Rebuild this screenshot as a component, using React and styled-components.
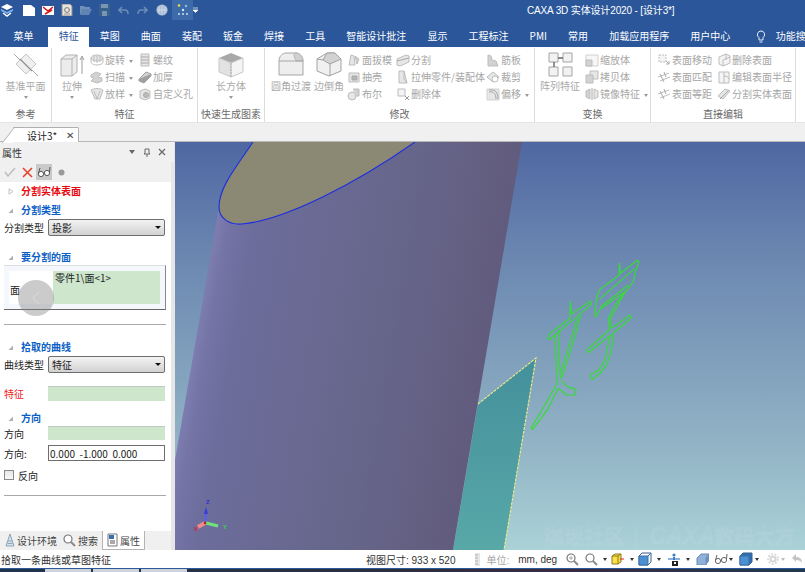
import React from "react";
import styled, { createGlobalStyle } from "styled-components";

const FONT = `"Noto Sans CJK SC", "Noto Sans", sans-serif`;
const MIXED = `"Liberation Sans", "Noto Sans CJK SC", sans-serif`;

const Global = createGlobalStyle`
  html, body { margin: 0; padding: 0; width: 805px; height: 572px; overflow: hidden; background: #f0f0f0; }
  * { box-sizing: border-box; }
  body { font-family: ${FONT}; font-size: 10px; }
`;

const Page = styled.div`
  width: 805px; height: 572px; display: flex; flex-direction: column; overflow: hidden;
`;

/* ---------- title bar ---------- */
const TitleBar = styled.div`
  height: 27px; background: #2b579a; display: flex; position: relative; padding-left: 0; color: #fff;
`;
const QuickIcon = styled.div`
  width: ${p => p.$w || 19}px; height: ${p => p.$h || 20}px; display: flex; align-items: center; justify-content: center;
  margin-left: ${p => p.$ml || 0}px; background: ${p => p.$active ? "#3d6aa8" : "transparent"}; flex: none;
`;
const TitleText = styled.div`
  position: absolute; left: 527px; top: 3px; line-height: 16px; font-size: 10px; color: #fff; white-space: nowrap;
  font-family: ${MIXED}; letter-spacing: -.15px;
`;

/* ---------- tabs ---------- */
const TabRow = styled.div`
  height: 20px; background: #2b579a; display: flex; padding-left: 3px; white-space: nowrap; overflow: hidden;
`;
const Tab = styled.div`
  padding: 0 ${p => p.$pad || 10.55}px; height: 20px; line-height: 18px; font-size: 10px; flex: none;
  margin-left: ${p => p.$ml || 0}px;
  color: ${p => p.$active ? "#2b579a" : "#fff"};
  background: ${p => p.$active ? "#fff" : "transparent"};
`;

/* ---------- ribbon ---------- */
const Ribbon = styled.div`
  height: 76px; background: #fff; display: flex; border-bottom: 1px solid #e4e4e4;
`;
const Group = styled.div`
  width: ${p => p.$w}px; flex: none; display: flex; flex-direction: column; position: relative;
  border-right: 1px solid #dcdcdc; height: 74px; margin-top: 1px;
`;
const GroupBody = styled.div`
  height: 59px; display: flex;
`;
const GroupLabel = styled.div`
  height: 14px; line-height: 14px; text-align: center; font-size: 10px; color: #6a6a6a; white-space: nowrap;
`;
const Big = styled.div`
  width: ${p => p.$w}px; margin-left: ${p => p.$ml || 0}px; flex: none; display: flex; flex-direction: column; align-items: center;
  padding-top: 3px; color: #aaa; font-size: 10px; white-space: nowrap;
`;
const BigLabel = styled.div`
  height: 14px; line-height: 14px; margin-top: 1px;
`;
const Caret = styled.div`
  width: 0; height: 0; border-left: 2px solid transparent; border-right: 2px solid transparent; border-top: 3px solid #999;
  margin-top: ${p => p.$mt || 3}px; margin-left: ${p => p.$ml || 0}px; flex: none;
`;
const Col = styled.div`
  width: ${p => p.$w}px; margin-left: ${p => p.$ml || 0}px; flex: none; padding-top: 3px; display: flex; flex-direction: column;
`;
const Row = styled.div`
  height: 17px; display: flex; align-items: center; gap: 1px; color: #a6a6a6; font-size: 10px; white-space: nowrap;
`;

/* ---------- doc tabs ---------- */
const DocBar = styled.div`
  height: 19px; background: #f0f0f0; border-bottom: 1px solid #b8b8b8; position: relative; padding-left: 13px; padding-top: 4px;
`;
const DocTab = styled.div`
  width: 66px; height: 15px; background: #fff; border: 1px solid #b0b0b0; border-left: none; border-bottom: none; position: relative;
  border-radius: 0 2px 0 0; display: flex; align-items: center; padding-left: 14px; font-size: 10px; color: #222; white-space: nowrap;
  &::before {
    content: ""; position: absolute; left: -5px; top: -1px; width: 10px; height: 15px; background: #fff;
    border-left: 1px solid #b0b0b0; transform: skewX(-38deg); border-top: 1px solid #b0b0b0;
  }
  & > span { position: relative; }
`;
const DocClose = styled.span`
  margin-left: 9px; font-size: 10px; color: #444; line-height: 10px;
`;

/* ---------- main ---------- */
const Main = styled.div`
  height: 408px; display: flex; flex: none;
`;
const Panel = styled.div`
  width: 175px; flex: none; background: #e6e6e6; display: flex; flex-direction: column; padding-right: 4px;
`;
const PanelHeader = styled.div`
  height: 20px; background: #f0f0f0; display: flex; align-items: center; padding: 0 8px 0 2px; color: #333; font-size: 10px; margin-right: -3px;
`;
const HeaderTools = styled.div`
  margin-left: auto; display: flex; gap: 7px; align-items: center;
`;
const PanelTools = styled.div`
  height: 20px; background: #f0f0f0; display: flex; align-items: center; padding-left: 2px; gap: 1px; margin-right: 0;
`;
const ToolBtn = styled.div`
  width: 16px; height: 16px; display: flex; align-items: center; justify-content: center;
  background: ${p => p.$on ? "#c9c9c9" : "transparent"};
`;
const PanelBody = styled.div`
  flex: 1; background: #fff; padding: 2px 0 0 4px; display: flex; flex-direction: column; min-height: 0;
`;
const Head = styled.div`
  height: 14px; margin-top: ${p => p.$mt || 0}px; display: flex; align-items: center; gap: 7px; margin-left: 4px;
  font-size: 10px; font-weight: 700; color: ${p => p.$red ? "#e8070f" : "#0c5fc4"}; line-height: 14px;
`;
const FieldRow = styled.div`
  height: ${p => p.$h || 17}px; margin-top: ${p => p.$mt || 0}px; display: flex; align-items: center; font-size: 10px;
  color: ${p => p.$red ? "#ee1c25" : "#222"}; width: 162px;
`;
const FieldLabel = styled.div`
  width: 44px; flex: none; white-space: nowrap;
`;
const SelectWrap = styled.div`
  flex: 1; height: 100%; position: relative; margin-right: 1px;
  &::after {
    content: ""; position: absolute; right: 4px; top: 7px; border-left: 3px solid transparent; border-right: 3px solid transparent; border-top: 3px solid #111;
  }
`;
const Select = styled.select`
  appearance: none; width: 100%; height: 100%; display: block; border: 1px solid #6e6e6e; border-radius: 2px; padding: 0 0 0 3px;
  font: 10px ${FONT}; color: #222; background: linear-gradient(#f3f3f3, #d2d2d2); outline: none;
`;
const GreenBox = styled.div`
  flex: 1; height: 100%; background: #cde6cc; border-top: 1px solid #c2c8c2; margin-right: 1px;
`;
const TextInput = styled.input`
  flex: 1; height: 100%; border: 1px solid #6e6e6e; padding: 0 0 0 1px; font: 10px ${FONT}; color: #222; min-width: 0; margin-right: 1px; background: #fff; outline: none;
`;
const FaceBox = styled.div`
  width: 162px; height: 45px; margin-top: 1px; position: relative; display: flex; padding: 5px 5px 5px 5px; background: #f4f7fc;
  border-bottom: 1px solid #666; border-right: 1px solid #888; border-top: 1px solid #ddd;
`;
const FaceLabel = styled.div`
  width: 44px; background: #fff; flex: none; font-size: 10px; color: #222; display: flex; align-items: center; padding-left: 1px; padding-top: 3px;
`;
const FaceValue = styled.div`
  flex: 1; background: #cde6cc; font-size: 10px; color: #222; padding-left: 2px; line-height: 14px;
`;
const BackCircle = styled.div`
  position: absolute; left: 14px; top: 14px; width: 36px; height: 36px; border-radius: 50%; background: rgba(130,130,130,.42);
  display: flex; align-items: center; justify-content: center;
`;
const Rule = styled.div`
  width: 162px; height: 1px; background: #a8a8a8; margin-top: ${p => p.$mt}px;
`;
const CheckRow = styled.div`
  display: flex; align-items: center; gap: 4px; height: 14px; margin-top: ${p => p.$mt}px; font-size: 10px; color: #222;
`;
const CheckBox = styled.span`
  width: 10px; height: 10px; border: 1px solid #8a8a8a; background: linear-gradient(#e6e6e6, #f8f8f8); display: block;
`;
const BottomTabs = styled.div`
  height: 19px; background: #f0f0f0; display: flex; align-items: flex-start; padding-left: 4px; font-size: 10px; color: #444; margin-right: 0;
`;
const BottomTab = styled.div`
  display: flex; align-items: center; gap: 2px; height: ${p => p.$on ? 19 : 18}px; padding: 0 ${p => p.$on ? 4 : 1}px;
  margin-left: ${p => p.$ml || 0}px; background: ${p => p.$on ? "#fff" : "transparent"};
  border: ${p => p.$on ? "1px solid #b4b4b4" : "none"}; border-top: none; white-space: nowrap;
`;

const Viewport = styled.div`
  width: 630px; height: 408px; position: relative; overflow: hidden; flex: none;
  background: linear-gradient(#4f67a2 0%, #6a86b0 27%, #93b5c6 76%, #abd2d7 100%);
`;
const Scene = styled.svg`
  display: block; width: 630px; height: 408px;
`;
const Watermark = styled.div`
  position: absolute; left: 369px; top: 380px; font-size: 20px; line-height: 28px; font-weight: 700; white-space: nowrap;
  color: rgba(255,255,255,.06); -webkit-text-stroke: .5px rgba(255,255,255,.1); letter-spacing: 0;
  & i { font-family: "Liberation Sans", sans-serif; font-size: 23px; }
  & b { font-weight: 400; margin: 0 11px 0 9px; }
`;

/* ---------- status ---------- */
const Status = styled.div`
  height: 18px; background: #fff; display: flex; align-items: center; font-size: 10px; color: #333; flex: none; white-space: nowrap; overflow: hidden;
`;
const StatusMsg = styled.div`
  width: 366px; flex: none; padding-left: 1px;
`;
const StatusText = styled.div`
  flex: none; margin-left: ${p => p.$ml || 0}px; color: ${p => p.$dim ? "#a8a8a8" : "#333"}; font-family: ${MIXED}; white-space: pre;
`;
const StatusIcon = styled.div`
  flex: none; margin-left: ${p => p.$ml || 0}px; width: ${p => p.$w || 14}px; height: 14px; display: flex; align-items: center; justify-content: center;
`;
const StatusCaret = styled.div`
  flex: none; margin-left: ${p => p.$ml || 2}px; border-left: 2px solid transparent; border-right: 2px solid transparent; border-top: 3px solid ${p => p.$dim ? "#bbb" : "#333"};
`;
const Strip = styled.div`
  flex: 1; border-top: 1px solid #2b5a9c; display: flex; background: linear-gradient(90deg, #20344e, #2a2f3c 50%, #3a2a40 70%, #1f3a50);
  padding-left: 45px; gap: 2px;
`;
const StripSeg = styled.div`
  width: 46px; background: #ccd3da;
`;

/* ---------- small helpers ---------- */
const S = ({ w = 14, h = 14, vb, children }) => (
  <svg width={w} height={h} viewBox={vb || `0 0 ${w} ${h}`} fill="none">{children}</svg>
);
const g1 = "#bdbdbd", g2 = "#e6e6e6", g3 = "#d2d2d2";

const icons = {
  revolve: <S><ellipse cx="7" cy="5" rx="6" ry="3" fill={g2} stroke={g1}/><path d="M1 5v4c0 1.6 2.7 3 6 3s6-1.4 6-3V5M4 3v6M7 3v7M10 3v6" stroke={g1}/></S>,
  thread: <S><path d="M3 1h8v12H3z" fill={g2} stroke={g1}/><path d="M3 4h8M3 7h8M3 10h8" stroke="#aaa"/></S>,
  sweep: <S><path d="M1 5l5-3 5 2-3 3 4 1v3l-5 2-6-2 3-3-3-1z" fill={g3} stroke={g1}/></S>,
  thick: <S><path d="M1 9l7-7 5 2-7 7z" fill={g3} stroke="#a0a0a0"/><path d="M1 9v2l5 2 7-7V4" fill="#9f9f9f" stroke="#a0a0a0"/></S>,
  loft: <S><path d="M1 3c4-2 8-2 12 0l-3 9H5z" fill={g2} stroke={g1}/><path d="M4 4l3 8 3-8" stroke={g1}/></S>,
  hole: <S><path d="M2 4l5-2 5 2v7l-5 2-5-2z" fill={g2} stroke={g1}/><circle cx="8" cy="8" r="2.5" fill="#bbb" stroke="#aaa"/></S>,
  draft: <S><path d="M2 12l2-10 3 1 1 9z" fill={g2} stroke={g1}/><path d="M8 3l4 3-2 5z" fill={g3} stroke={g1}/></S>,
  shell: <S><path d="M2 3h10v9H2z" fill={g2} stroke={g1}/><path d="M5 6h5v4H5z" fill="#b5b5b5" stroke="#a8a8a8"/></S>,
  bool: <S><circle cx="5" cy="9" r="4" fill={g2} stroke={g1}/><path d="M6 2h6v7H8" fill={g3} stroke={g1}/></S>,
  split: <S><path d="M1 6l9-4 3 1v6l-9 4-3-1z" fill={g2} stroke={g1}/><path d="M1 8l12-3" stroke="#aaa"/></S>,
  extPart: <S><path d="M3 1h5l3 12H3z" fill={g2} stroke={g1}/><path d="M8 1v8l3 4" stroke={g1}/></S>,
  delBody: <S><path d="M2 2h7v7H2z" fill="#f4f4f4" stroke={g1}/><path d="M9 9l4 4M13 9l-4 4" stroke="#999"/></S>,
  rib: <S><path d="M2 13V2l3 1 1 4 4 1 2 5z" fill={g3} stroke={g1}/></S>,
  trim: <S><path d="M1 7l6-5 6 5-6 5z" fill={g2} stroke={g1}/><circle cx="9" cy="9" r="3" fill="#fff" stroke={g1}/></S>,
  offset: <S><path d="M1 2h12v11H1z" fill={g2} stroke={g3}/><path d="M3 5c5-1 7 2 7 7M3 3c7-1 9 3 9 9" stroke="#a5a5a5"/></S>,
  scale: <S><path d="M1 2h12v11H1z" fill="#f6f6f6" stroke={g3}/><path d="M1 7h6v6H1z" fill={g3} stroke={g1}/></S>,
  copy: <S><path d="M5 1h8v8H5z" fill={g2} stroke={g1}/><path d="M1 5h7v8H1z" fill={g3} stroke={g1}/></S>,
  mirror: <S><path d="M1 4l4-2v10l-4-2z" fill={g3} stroke={g1}/><path d="M9 2l4 2v6l-4 2z" fill={g2} stroke={g1}/><path d="M7 1v12" stroke="#aaa"/></S>,
  move: <S><path d="M2 2h7v7H2z" fill="#f4f4f4" stroke={g1} strokeDasharray="2 1"/><path d="M9 8l3 3M12 8v3H9" stroke="#aaa"/></S>,
  match: <S><path d="M1 7l11-4M3 11l10-4" stroke={g1}/><path d="M3 4l4 8M7 2l2 5" stroke="#aaa"/></S>,
  delFace: <S><path d="M2 4l7-3 4 2v7l-7 3-4-2z" fill="#f4f4f4" stroke={g1}/><path d="M9 1v6M6 13V7l7-3" stroke={g1}/></S>,
  editR: <S><path d="M2 2h10v11H2z" fill="#f4f4f4" stroke={g1}/><path d="M7 2v11M7 6c3 0 4 1 5 3" stroke={g1}/></S>,
  splitFace: <S><path d="M1 9l7-7 5 2-7 8z" fill={g2} stroke={g1}/><path d="M3 12l9-9" stroke="#aaa"/></S>,
};

const Small = ({ i, t, caret }) => (
  <Row>{icons[i]}<span>{t}</span>{caret && <Caret $mt={0} $ml={3} />}</Row>
);

const BigPlane = () => (
  <S w={28} h={27}>
    <path d="M2 3l6 6M20 19l6 6" stroke="#a9a9a9"/>
    <path d="M14 3l10 10-10 10L4 13z" fill="#efefef" stroke="#c5c5c5"/>
    <path d="M8 8l12 12" stroke="#8e8e8e" strokeWidth="1.3"/>
  </S>
);
const BigExtrude = () => (
  <S w={28} h={27}>
    <path d="M3 8l5-4h11v17l-5 4H3z" fill="#ececec" stroke="#b2b2b2"/>
    <path d="M3 8h11v17M14 8l5-4" stroke="#b2b2b2"/>
    <path d="M24 23V6M22 9l2-4 2 4" stroke="#9d9d9d"/>
  </S>
);
const BigBox = () => (
  <S w={28} h={27}>
    <path d="M14 2l12 5-12 5L2 7z" fill="#a8a8a8"/>
    <path d="M2 7l12 5v14L2 21z" fill="#e2e2e2" stroke="#c8c8c8"/>
    <path d="M26 7l-12 5v14l12-5z" fill="#f4f4f4" stroke="#c8c8c8"/>
    <path d="M14 12v14" stroke="#b0b0b0" strokeDasharray="2 1"/>
  </S>
);
const BigFillet = () => (
  <S w={28} h={27}>
    <path d="M2 24V10c0-4 3-8 7-8h10c4 0 7 4 7 8v14z" fill="#eeeeee" stroke="#a6a6a6"/>
    <path d="M19 2c4 0 7 4 7 8h-7c-1-3-4-8 0-8z" fill="#d0d0d0" stroke="#b5b5b5"/>
    <path d="M2 10h17l7 0" stroke="#a6a6a6"/>
  </S>
);
const BigChamfer = () => (
  <S w={28} h={27}>
    <path d="M2 8l10-6h8l6 6v12l-12 5-12-5z" fill="#f0f0f0" stroke="#a2a2a2"/>
    <path d="M12 2l8 0 6 6-11 5-7-4z" fill="#d2d2d2" stroke="#a2a2a2"/>
    <path d="M2 8l6 1M15 13v12" stroke="#a2a2a2"/>
  </S>
);
const BigPattern = () => (
  <S w={28} h={27}>
    <path d="M3 2h9v9H3zM17 2h9v9h-9zM3 16h9v9H3zM17 16h9v9h-9z" fill="#f2f2f2" stroke="#a4a4a4"/>
    <path d="M12 7h5M8 11v5" stroke="#666" strokeWidth="1.4"/>
  </S>
);

const GlassesSvg = ({ c = "#555" }) => (
  <S w={14} h={12}>
    <circle cx="4" cy="8" r="2.6" stroke={c} fill="#fff"/><circle cx="10" cy="7" r="2.6" stroke={c} fill="#fff"/>
    <path d="M6.5 7.5l1-1M1.5 7L3 2M12.5 6L13 1" stroke={c}/>
  </S>
);

const Magnifier = ({ plus }) => (
  <S w={14} h={14}>
    <circle cx="6" cy="6" r="4" fill="#fff" stroke="#777" strokeWidth="1.2"/>
    <path d="M9 9l4 4" stroke="#8a8a8a" strokeWidth="2"/>
    {plus && <path d="M4 6h4M6 4v4" stroke="#aaa"/>}
  </S>
);
const BlueCube = ({ light }) => (
  <S w={14} h={14}>
    <path d="M1 4l3-3h9v9l-3 3H1z" fill={light ? "#fff" : "#2d6fb5"} stroke="#3b5f88"/>
    <path d="M1 4h9v9H1z" fill="#4c90d4" stroke="#3b6ea8"/>
    <path d="M10 4l3-3" stroke="#3b6ea8"/>
  </S>
);

const Triangle = ({ open }) => (
  <svg width="6" height="7" viewBox="0 0 6 7" style={{ flex: "none" }}>
    {open ? <path d="M5 1.5V6H0.5z" fill="#b0b0b0"/> : <path d="M1 .8l4 2.7-4 2.7z" fill="#fff" stroke="#aaa" strokeWidth=".7"/>}
  </svg>
);

const tabs = [
  ["菜单"], ["特征", true, 4], ["草图"], ["曲面"], ["装配"], ["钣金"], ["焊接"], ["工具"], ["智能设计批注"], ["显示"], ["工程标注"], ["PMI"], ["常用"], ["加载应用程序"], ["用户中心"],
];

const TZ = "translate(285 108) scale(0.3333)";

export default function App() {
  return (
    <Page>
      <Global />
      <TitleBar>
        <QuickIcon $w={14}>
          <S w={14} h={14}><path d="M7 1l6 3-6 3-6-3z" fill="#fff"/><path d="M1 6l6 3 6-3v2l-6 3-6-3z" fill="#7fb2ec"/><path d="M3 10l4 3 4-3" stroke="#fff" strokeWidth="1.4"/></S>
        </QuickIcon>
        <QuickIcon $ml={5}><S w={12} h={11}><path d="M0 0h8l4 3v8H0z" fill="#fff"/></S></QuickIcon>
        <QuickIcon><S w={12} h={11}><path d="M0 1h12v9H0z" fill="#fff"/><path d="M1 2l5 4 5-4M3 9l7-4" stroke="#d21c1c" strokeWidth="1.6"/></S></QuickIcon>
        <QuickIcon><S w={12} h={12}><path d="M1 0h8l2 2v10H1z" fill="#e8e4dc" stroke="#8d8d8d"/><circle cx="6" cy="6" r="2.4" stroke="#777"/><path d="M3 10h6" stroke="#999"/></S></QuickIcon>
        <QuickIcon><S w={12} h={10}><path d="M0 1h4l1 1h5v2H3L1 9H0z" fill="#6f90b8"/><path d="M3 4h9L9 10H0z" fill="#6185b2"/></S></QuickIcon>
        <QuickIcon><S w={11} h={12}><path d="M0 0h11v12H0z" fill="#39618e"/><path d="M2 0h7v4H2z" fill="#7a94b4"/><path d="M3 7h5v5H3z" fill="#7a94b4"/></S></QuickIcon>
        <QuickIcon><S w={11} h={9}><path d="M4 1L1 4l3 3M1 4h6c2 0 3 1 3 4" stroke="#6b8db7" strokeWidth="1.6"/></S></QuickIcon>
        <QuickIcon><S w={11} h={9}><path d="M7 1l3 3-3 3M10 4H4C2 4 1 5 1 8" stroke="#6b8db7" strokeWidth="1.6"/></S></QuickIcon>
        <QuickIcon><S w={12} h={12}><circle cx="6" cy="6" r="5.6" fill="#a9bdd4"/><path d="M3 3v6M6 1v10M9 3v6M1 6h10" stroke="#dbe3ec" strokeWidth=".7"/></S></QuickIcon>
        <QuickIcon $w={21} $ml={1} $active><S w={14} h={14}><circle cx="3" cy="2.5" r="1.3" fill="#f1d84a"/><circle cx="7" cy="7" r="1.2" fill="#dbe7f4"/><circle cx="10" cy="3" r="1.2" fill="#8ec0ee"/><circle cx="3" cy="11" r="1" fill="#cfe0f0"/><circle cx="7" cy="11" r="1" fill="#cfe0f0"/><circle cx="11" cy="11" r="1" fill="#cfe0f0"/></S></QuickIcon>
        <QuickIcon $w={6}><S w={6} h={6}><path d="M0 1h5M0 3h5l-2.5 2.5z" stroke="#fff" strokeWidth=".7" fill="#fff"/></S></QuickIcon>
        <TitleText>CAXA 3D 实体设计2020 - [设计3*]</TitleText>
      </TitleBar>

      <TabRow>
        {tabs.map(([t, active, ml]) => (
          <Tab key={t} $active={active} $ml={ml}>{t}</Tab>
        ))}
        <QuickIcon $w={14} $ml={13} $h={18}>
          <S w={10} h={13}><path d="M5 1a3.6 3.6 0 0 0-2 6.6V10h4V7.6A3.6 3.6 0 0 0 5 1zM3.5 12h3" stroke="#fff" strokeWidth=".9"/></S>
        </QuickIcon>
        <Tab $pad={8}>功能搜</Tab>
      </TabRow>

      <Ribbon>
        <Group $w={52}>
          <GroupBody>
            <Big $w={51}><BigPlane /><BigLabel>基准平面</BigLabel><Caret /></Big>
          </GroupBody>
          <GroupLabel>参考</GroupLabel>
        </Group>
        <Group $w={146}>
          <GroupBody>
            <Big $w={30} $ml={5}><BigExtrude /><BigLabel>拉伸</BigLabel><Caret /></Big>
            <Col $w={48} $ml={3}>
              <Small i="revolve" t="旋转" caret />
              <Small i="sweep" t="扫描" caret />
              <Small i="loft" t="放样" caret />
            </Col>
            <Col $w={56}>
              <Small i="thread" t="螺纹" />
              <Small i="thick" t="加厚" />
              <Small i="hole" t="自定义孔" />
            </Col>
          </GroupBody>
          <GroupLabel>特征</GroupLabel>
        </Group>
        <Group $w={67}>
          <GroupBody>
            <Big $w={66}><BigBox /><BigLabel>长方体</BigLabel><Caret /></Big>
          </GroupBody>
          <GroupLabel>快速生成图素</GroupLabel>
        </Group>
        <Group $w={270}>
          <GroupBody>
            <Big $w={40} $ml={6}><BigFillet /><BigLabel>圆角过渡</BigLabel></Big>
            <Big $w={36}><BigChamfer /><BigLabel>边倒角</BigLabel></Big>
            <Col $w={49}>
              <Small i="draft" t="面拔模" />
              <Small i="shell" t="抽壳" />
              <Small i="bool" t="布尔" />
            </Col>
            <Col $w={90}>
              <Small i="split" t="分割" />
              <Small i="extPart" t="拉伸零件/装配体" />
              <Small i="delBody" t="删除体" />
            </Col>
            <Col $w={48}>
              <Small i="rib" t="筋板" />
              <Small i="trim" t="裁剪" />
              <Small i="offset" t="偏移" caret />
            </Col>
          </GroupBody>
          <GroupLabel>修改</GroupLabel>
        </Group>
        <Group $w={116}>
          <GroupBody>
            <Big $w={50}><BigPattern /><BigLabel>阵列特征</BigLabel></Big>
            <Col $w={64}>
              <Small i="scale" t="缩放体" />
              <Small i="copy" t="拷贝体" />
              <Small i="mirror" t="镜像特征" caret />
            </Col>
          </GroupBody>
          <GroupLabel>变换</GroupLabel>
        </Group>
        <Group $w={145}>
          <GroupBody>
            <Col $w={60} $ml={6}>
              <Small i="move" t="表面移动" />
              <Small i="match" t="表面匹配" />
              <Small i="match" t="表面等距" />
            </Col>
            <Col $w={78}>
              <Small i="delFace" t="删除表面" />
              <Small i="editR" t="编辑表面半径" />
              <Small i="splitFace" t="分割实体表面" />
            </Col>
          </GroupBody>
          <GroupLabel>直接编辑</GroupLabel>
        </Group>
      </Ribbon>

      <DocBar>
        <DocTab><span>设计3*</span><DocClose>✕</DocClose></DocTab>
      </DocBar>

      <Main>
        <Panel>
          <PanelHeader>
            属性
            <HeaderTools>
              <S w={8} h={6}><path d="M1 1h6L4 5z" fill="#666"/></S>
              <S w={8} h={9}><path d="M2 1h4v4l1 1H1l1-1zM4 6v3" stroke="#666"/></S>
              <S w={8} h={8}><path d="M1 1l6 6M7 1L1 7" stroke="#666" strokeWidth="1.2"/></S>
            </HeaderTools>
          </PanelHeader>
          <PanelTools>
            <ToolBtn><S w={12} h={10}><path d="M1 5l3 4 7-8" stroke="#bcbcbc" strokeWidth="1.4"/></S></ToolBtn>
            <ToolBtn><S w={11} h={11}><path d="M1 1l9 9M10 1l-9 9" stroke="#e8432a" strokeWidth="1.6"/></S></ToolBtn>
            <ToolBtn $on><GlassesSvg /></ToolBtn>
            <ToolBtn><S w={7} h={7}><circle cx="3.5" cy="3.5" r="3" fill="#9a9a9a"/></S></ToolBtn>
          </PanelTools>
          <PanelBody>
            <Head $red><Triangle />分割实体表面</Head>
            <Head $mt={5} ><Triangle open />分割类型</Head>
            <FieldRow $mt={2}>
              <FieldLabel>分割类型</FieldLabel>
              <SelectWrap><Select defaultValue="投影"><option>投影</option></Select></SelectWrap>
            </FieldRow>
            <Head $mt={14}><Triangle open />要分割的面</Head>
            <FaceBox>
              <FaceLabel>面</FaceLabel>
              <FaceValue>零件1\面&lt;1&gt;</FaceValue>
              <BackCircle>
                <S w={10} h={14}><path d="M8 1L2 7l6 6" stroke="#dcdcdc" strokeWidth="1"/></S>
              </BackCircle>
            </FaceBox>
            <Rule $mt={14} />
            <Head $mt={15}><Triangle open />拾取的曲线</Head>
            <FieldRow $mt={2}>
              <FieldLabel>曲线类型</FieldLabel>
              <SelectWrap><Select defaultValue="特征"><option>特征</option></Select></SelectWrap>
            </FieldRow>
            <FieldRow $h={15} $mt={13} $red>
              <FieldLabel>特征</FieldLabel>
              <GreenBox />
            </FieldRow>
            <Head $mt={10}><Triangle open />方向</Head>
            <FieldRow $h={14} $mt={1}>
              <FieldLabel>方向</FieldLabel>
              <GreenBox />
            </FieldRow>
            <FieldRow $h={16} $mt={5}>
              <FieldLabel>方向:</FieldLabel>
              <TextInput readOnly value="0.000  -1.000  0.000" />
            </FieldRow>
            <CheckRow $mt={7}><CheckBox />反向</CheckRow>
            <Rule $mt={13} />
          </PanelBody>
          <BottomTabs>
            <BottomTab>
              <S w={10} h={14}><path d="M5 1L1 13h8z" fill="#d6e2ea" stroke="#8fa6b8"/><path d="M3 8h4M2.5 10.5h5" stroke="#8fa6b8"/></S>
              设计环境
            </BottomTab>
            <BottomTab $ml={3}>
              <Magnifier />
              搜索
            </BottomTab>
            <BottomTab $on $ml={3}>
              <S w={11} h={14}><path d="M1 1h9v12H1z" fill="#fff" stroke="#777"/><path d="M2 2h5v4H2z" fill="#3b6fb0"/><path d="M3 8h5M3 10h5" stroke="#555"/></S>
              属性
            </BottomTab>
          </BottomTabs>
        </Panel>

        <Viewport>
          <Scene viewBox="0 0 630 408">
            <defs>
              <linearGradient id="body" gradientUnits="userSpaceOnUse" x1="20" y1="193" x2="345" y2="250">
                <stop offset="0" stopColor="#7f7eb2"/>
                <stop offset=".04" stopColor="#7474a6"/>
                <stop offset=".12" stopColor="#6c6d9b"/>
                <stop offset=".5" stopColor="#67678d"/>
                <stop offset=".85" stopColor="#625d7e"/>
                <stop offset="1" stopColor="#5e587a"/>
              </linearGradient>
              <linearGradient id="teal" x1="0" y1="0" x2="0" y2="1">
                <stop offset="0" stopColor="#44909b"/>
                <stop offset="1" stopColor="#58a8a8"/>
              </linearGradient>
            </defs>
            <path d="M303 262 L361 216 L329 408 L278 408 Z" fill="url(#teal)"/>
            <path d="M303 262 L361 216 L329 408" fill="none" stroke="#f0ec8a" strokeWidth="1.1" strokeDasharray="3 1"/>
            <path d="M44 65 L0 318 L0 408 L278 408 L347 0 L240 0 Z" fill="url(#body)"/>
            <path d="M78 0 C62 24 44 45 44 65 C44 77 55 83 67 82 C110 78 180 42 240 0 Z" fill="#8b8874"/>
            <path d="M78 0 C62 24 44 45 44 65 C44 77 55 83 67 82 C110 78 180 42 240 0" fill="none" stroke="#1c2ee0" strokeWidth="1.1"/>

            <g transform={TZ} fill="none" stroke="#36dc36" strokeWidth="3.6" strokeLinejoin="round">
              <path d="M331 155 L335 192 L392 153 L394 162 L345 205 L270 268 L262 265 L270 250 L330 205 Z"/>
              <path d="M362 195 L345 260 L305 385 M352 205 L335 260 L300 375"/>
              <path d="M285 252 L288 340 L292 400 M296 240 L298 340 L302 385"/>
              <path d="M292 400 L240 490 L213 535 L218 538 L262 480 L295 415 L320 435 L345 435 L348 418 L322 410 L303 392"/>
              <path d="M478 40 L482 70 L530 32 L537 35 L525 70 L520 95 L490 135 L460 190 L450 205 L455 235 L510 195 L513 205 L460 250 L455 300 L440 345 L420 370 L398 388 L392 385 L392 372 L415 362 L435 330 L445 280 L452 255 L385 308 L382 298 L448 240 L445 205 L465 165 L495 125 L420 178 L408 200 L404 195 L410 140 L420 118 L478 75 Z"/>
              <path d="M418 148 L525 55 M420 172 L505 105"/>
            </g>

            <g>
              <path d="M30 381 L31 367" stroke="#5b63d8" strokeWidth="3"/>
              <path d="M29 372 L31 365 L33 372 Z" fill="#3b3fd0"/>
              <path d="M30 381 L23 385" stroke="#f08a8a" strokeWidth="4"/>
              <path d="M31 381 L43 384" stroke="#6fe27a" strokeWidth="3"/>
              <circle cx="30" cy="381" r="1.3" fill="#b02020"/>
              <text x="31" y="362" fontSize="6" fontFamily="Liberation Sans" fontWeight="700" fill="#2b2fd6">Z</text>
              <text x="19" y="389" fontSize="6" fontFamily="Liberation Sans" fontWeight="700" fill="#d62b3a">X</text>
              <text x="48" y="387" fontSize="6" fontFamily="Liberation Sans" fontWeight="700" fill="#38d94a">Y</text>
            </g>
          </Scene>
          <Watermark>咖迷社区<b>|</b><i>CAXA</i>数码大方</Watermark>
        </Viewport>
      </Main>

      <Status>
        <StatusMsg>拾取一条曲线或草图特征</StatusMsg>
        <StatusText>视图尺寸: 933 x 520</StatusText>
        <StatusIcon $ml={18} $w={8}><S w={7} h={13}><path d="M1 0h5v13H1z" fill="#e6e6e6"/><path d="M1 2h3M1 5h3M1 8h3M1 11h3" stroke="#b0b0b0"/></S></StatusIcon>
        <StatusText $ml={5} $dim>单位:</StatusText>
        <StatusText $ml={9}>mm, deg</StatusText>
        <StatusIcon $ml={8}><Magnifier plus /></StatusIcon>
        <StatusIcon $ml={5}><Magnifier /></StatusIcon>
        <StatusCaret $ml={5} />
        <StatusIcon $ml={3}><S w={13} h={12}><path d="M1 3l3-2h6v8l-3 2H1z" fill="#fbe04a" stroke="#8a7a20"/><path d="M1 3h6v8M7 3l3-2" stroke="#8a7a20"/><path d="M9 6h4" stroke="#d22"/></S></StatusIcon>
        <StatusCaret $ml={6} />
        <StatusIcon $ml={4}><BlueCube light /></StatusIcon>
        <StatusCaret $ml={5} />
        <StatusIcon $ml={6}><S w={14} h={13}><circle cx="7" cy="2" r="1.6" fill="#3d7cc4"/><path d="M1 6h12" stroke="#3d7cc4" strokeWidth="1.2"/><path d="M6 4h2v3H6z" fill="#3d7cc4"/><path d="M5 8h6v5H5z" fill="#222"/><path d="M7 9h2v2H7z" fill="#fff"/></S></StatusIcon>
        <StatusCaret $ml={5} />
        <StatusIcon $ml={5}><S w={13} h={12}><path d="M1 5l4-4h8l-3 4v7H1z" fill="#8fb0d8" stroke="#6b8cb4"/><path d="M10 5L13 1v7l-3 4z" fill="#6f90bc"/></S></StatusIcon>
        <StatusIcon $ml={5}><GlassesSvg c="#666" /></StatusIcon>
        <StatusCaret $ml={1} />
        <StatusIcon $ml={6}><BlueCube /></StatusIcon>
        <StatusCaret $ml={2} />
        <StatusIcon $ml={7}><S w={12} h={12}><circle cx="6" cy="6" r="3.6" fill="#d6d6d6"/><circle cx="6" cy="6" r="5" stroke="#d6d6d6" strokeDasharray="2 1.5" strokeWidth="1.6"/><circle cx="6" cy="6" r="1.5" fill="#fff"/></S></StatusIcon>
        <StatusCaret $ml={1} $dim />
        <StatusIcon $ml={5}><S w={13} h={12}><path d="M5 1L1 5l4 4V7c3 0 5 1 6 3 0-4-2-6-6-6z" fill="#c4c4c4"/></S></StatusIcon>
      </Status>
      <Strip>
        <StripSeg /><StripSeg /><StripSeg />
      </Strip>
    </Page>
  );
}
